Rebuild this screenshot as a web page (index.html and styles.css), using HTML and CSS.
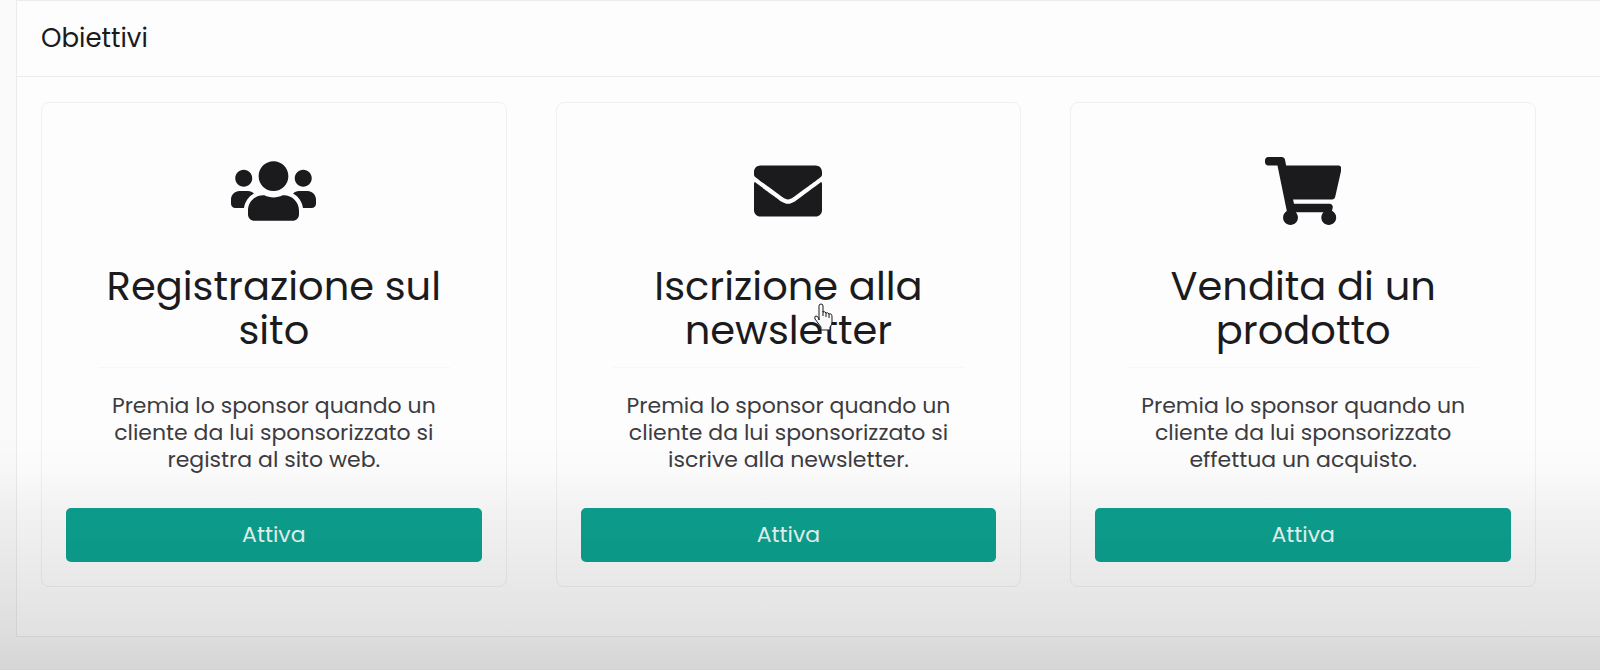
FILE: index.html
```html
<!DOCTYPE html>
<html lang="it">
<head>
<meta charset="utf-8">
<meta name="viewport" content="width=device-width, initial-scale=1">
<title>Obiettivi</title>
<link rel="stylesheet" href="styles.css">
</head>
<body>
<main class="panel">
  <header class="panel-header">
    <h1 class="panel-title">Obiettivi</h1>
  </header>
  <div class="goals">
    <article class="card">
      <svg class="card-icon" viewBox="0 0 640 512" aria-hidden="true"><path d="M96 224c35.300 0 64-28.700 64-64s-28.700-64-64-64-64 28.700-64 64 28.700 64 64 64zm448 0c35.300 0 64-28.700 64-64s-28.700-64-64-64-64 28.700-64 64 28.700 64 64 64zm32 32h-64c-17.600 0-33.500 7.100-45.100 18.600 40.300 22.100 68.900 62 75.100 109.400h66c17.700 0 32-14.300 32-32v-32c0-35.300-28.700-64-64-64zm-256 0c61.900 0 112-50.100 112-112S381.900 32 320 32 208 82.100 208 144s50.100 112 112 112zm76.800 32h-8.300c-20.800 10-43.900 16-68.500 16s-47.600-6-68.500-16h-8.300C179.600 288 128 339.600 128 403.200V432c0 26.500 21.500 48 48 48h288c26.500 0 48-21.500 48-48v-28.800c0-63.600-51.600-115.200-115.200-115.200zm-223.700-13.400C161.500 263.100 145.600 256 128 256H64c-35.300 0-64 28.700-64 64v32c0 17.700 14.300 32 32 32h65.900c6.300-47.400 34.900-87.300 75.200-109.400z"/></svg>
      <h2 class="card-title">Registrazione sul sito</h2>
      <p class="card-text">Premia lo sponsor quando un cliente da lui sponsorizzato si registra al sito web.</p>
      <button class="btn" type="button">Attiva</button>
    </article>
    <article class="card">
      <svg class="card-icon" viewBox="0 0 512 512" aria-hidden="true"><path d="M502.300 190.800c3.900-3.100 9.700-.2 9.700 4.700V400c0 26.500-21.500 48-48 48H48c-26.500 0-48-21.500-48-48V195.600c0-5 5.700-7.800 9.700-4.700 22.400 17.400 52.100 39.500 154.100 113.600 21.100 15.400 56.700 47.800 92.200 47.600 35.700.3 72-32.800 92.300-47.600 102-74.100 131.600-96.300 154-113.700zM256 320c23.200.4 56.600-29.200 73.400-41.400 132.700-96.300 142.800-104.700 173.400-128.700 5.800-4.500 9.200-11.500 9.200-18.900v-19c0-26.500-21.500-48-48-48H48c-26.500 0-48 21.500-48 48v19c0 7.400 3.400 14.300 9.200 18.900 30.600 23.900 40.700 32.400 173.400 128.700 16.800 12.200 50.200 41.800 73.400 41.400z"/></svg>
      <h2 class="card-title">Iscrizione alla newsletter
        <svg class="pointer" viewBox="0 0 20 28" aria-hidden="true"><path d="M6 17V3q0-2 2-2t2 2v6q2-1 3 1 2-1 3 1 3-1 3 3v5q0 3-2 5v3H8v-3l-6-8q-1-3 1-3 2 0 3 3z"/><path d="M10 8v5M13 10v4M16 11v4"/></svg>
      </h2>
      <p class="card-text">Premia lo sponsor quando un cliente da lui sponsorizzato si iscrive alla newsletter.</p>
      <button class="btn" type="button">Attiva</button>
    </article>
    <article class="card">
      <svg class="card-icon" viewBox="0 0 576 512" aria-hidden="true"><path d="M528.120 301.319l47.273-208C578.806 78.301 567.391 64 551.990 64H159.208l-9.166-44.810C147.758 8.021 137.930 0 126.529 0H24C10.745 0 0 10.745 0 24v16c0 13.255 10.745 24 24 24h69.883l70.248 343.435C147.325 417.100 136 435.222 136 456c0 30.928 25.072 56 56 56s56-25.072 56-56c0-15.674-6.447-29.835-16.824-40h209.647C430.447 426.165 424 440.326 424 456c0 30.928 25.072 56 56 56s56-25.072 56-56c0-22.172-12.888-41.332-31.579-50.405l5.517-24.276c3.413-15.018-8.002-29.319-23.403-29.319H218.117l-6.545-32h293.145c11.206 0 20.920-7.754 23.403-18.681z"/></svg>
      <h2 class="card-title">Vendita di un prodotto</h2>
      <p class="card-text">Premia lo sponsor quando un cliente da lui sponsorizzato effettua un acquisto.</p>
      <button class="btn" type="button">Attiva</button>
    </article>
  </div>
</main>
</body>
</html>
```

FILE: styles.css
```css
* {
  box-sizing: border-box;
}

body {
  margin: 0;
  min-height: 100vh;
  padding: 0 0 32px 16px;
  background: #fafafb;
  color: #1b1b1d;
  font-family: Poppins, Inter, "Liberation Sans", sans-serif;
  font-weight: 400;
}

/* Shade that darkens the lower part of the window */
body::after {
  content: "";
  position: fixed;
  inset: 0;
  pointer-events: none;
  background: linear-gradient(transparent 65%, rgba(0, 0, 6, 0.012) 70%, rgba(0, 0, 6, 0.045) 76%, rgba(0, 0, 6, 0.085) 88%, rgba(0, 0, 6, 0.115) 95%, rgba(0, 0, 0, 0.145));
}

.panel {
  background: #fefdfe;
  border: 1px solid #ececef;
  border-right: 0;
}

.panel-header {
  padding: 19px 24px 20px;
  border-bottom: 1px solid #ececef;
}

.panel-title {
  margin: 0;
  font-size: 26px;
  line-height: 36px;
  font-weight: 400;
}

.goals {
  display: grid;
  grid-template-columns: repeat(3, 1fr);
  gap: 49px;
  padding: 25px 64px 49px 24px;
}

.card {
  display: flex;
  flex-direction: column;
  align-items: center;
  padding: 24px;
  border: 1px solid #f0f0f2;
  border-radius: 8px;
  text-align: center;
}

.card-icon {
  height: 68px;
  margin: 30px 0 39px;
  fill: #1b1b1d;
}

.card-title {
  position: relative;
  width: 100%;
  margin: 0;
  padding: 0 24px 16px;
  font-size: 40px;
  line-height: 44px;
  font-weight: 400;
}

.card-title::after {
  content: "";
  position: absolute;
  inset: auto 32px 0;
  border-bottom: 1px solid #f7f7f9;
}

.card-text {
  flex: 1;
  margin: 24px 0 35px;
  padding: 0 32px;
  color: #3c3c40;
  font-size: 22px;
  line-height: 27px;
}

.btn {
  width: 100%;
  height: 54px;
  padding: 0 24px 2px;
  border: 0;
  border-radius: 5px;
  background: #0da391;
  color: #ecfaf7;
  font: inherit;
  font-size: 22px;
  cursor: pointer;
}

.pointer {
  position: absolute;
  top: 39px;
  left: 56%;
  width: 20px;
  height: 28px;
  fill: #fafafa;
  stroke: #1b1b1d;
  stroke-width: 1;
}
```
